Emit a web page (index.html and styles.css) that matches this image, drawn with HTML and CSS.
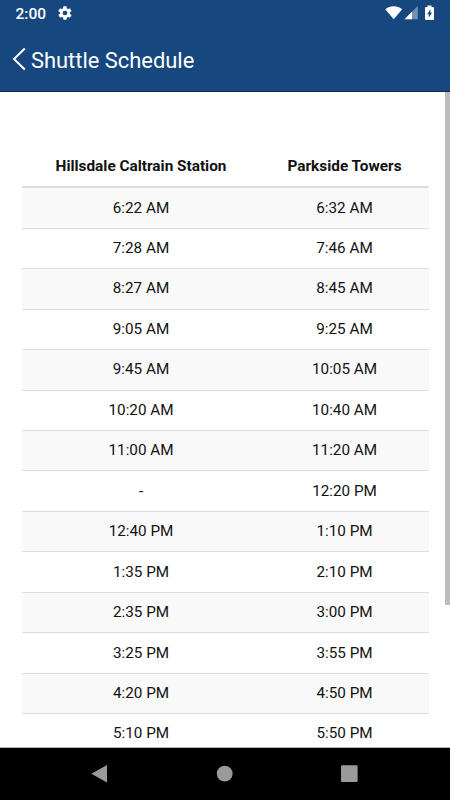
FILE: index.html
```html
<!DOCTYPE html>
<html lang="en">
<head>
<meta charset="utf-8">
<title>Shuttle Schedule</title>
<link rel="stylesheet" href="styles.css">
</head>
<body>
<header class="top">
  <div class="status">
    <span class="clock">2:00</span>
    <svg class="gear" width="16" height="16" viewBox="0 0 24 24"><path fill="#fff" d="M19.4 13a7.5 7.5 0 0 0 0-2l2.1-1.6a.5.5 0 0 0 .1-.7l-2-3.4a.5.5 0 0 0-.6-.2l-2.500 1a7.300 7.300 0 0 0-1.700-1l-.4-2.600a.5.5 0 0 0-.5-.5h-4a.5.5 0 0 0-.5.500l-.4 2.600a7.300 7.300 0 0 0-1.700 1l-2.500-1a.5.5 0 0 0-.6.200l-2 3.400a.5.5 0 0 0 .1.700L4.500 11a7.500 7.500 0 0 0 0 2l-2.100 1.600a.5.5 0 0 0-.1.700l2 3.400c.1.200.4.300.6.200l2.500-1a7.300 7.300 0 0 0 1.700 1l.4 2.600c0 .300.200.500.500.500h4c.3 0 .500-.2.500-.5l.4-2.600a7.300 7.300 0 0 0 1.700-1l2.500 1c.2.100.5 0 .6-.2l2-3.400a.5.5 0 0 0-.1-.7zM12 15.500a3.500 3.500 0 1 1 0-7 3.500 3.500 0 0 1 0 7z"/></svg>
    <svg class="signals" width="52" height="16" viewBox="0 0 52 16">
      <path fill="#fff" d="M.3 4.200C4.700.1 12.700.1 17.200 4.200L8.700 14.300z"/>
      <path fill="#7390b2" d="M32.800 1v13.300H19.500z"/>
      <path fill="#fff" d="M27 6.800v7.500h-7.500z"/>
      <path fill="#fff" d="M42.500.500h4V2h1.600q.9 0 .9.900v11.200q0 .9-.9.900h-7.200q-.9 0-.9-.9V2.900q0-.9.900-.9h1.600z"/>
      <path fill="#16477e" d="M45.400 4.200v3.300h1.600l-3.200 5.300V9.200h-1.600z"/>
    </svg>
  </div>
  <div class="title-bar">
    <svg class="back" width="14" height="24" viewBox="0 0 14 24"><path fill="none" stroke="#fff" stroke-width="2" d="M12.800 1.500 2 12l10.800 10.500"/></svg>
    <h1>Shuttle Schedule</h1>
  </div>
</header>
<main class="content">
  <div class="schedule">
    <div class="row head"><span>Hillsdale Caltrain Station</span><span>Parkside Towers</span></div>
    <div class="row"><span>6:22 AM</span><span>6:32 AM</span></div>
    <div class="row"><span>7:28 AM</span><span>7:46 AM</span></div>
    <div class="row"><span>8:27 AM</span><span>8:45 AM</span></div>
    <div class="row"><span>9:05 AM</span><span>9:25 AM</span></div>
    <div class="row"><span>9:45 AM</span><span>10:05 AM</span></div>
    <div class="row"><span>10:20 AM</span><span>10:40 AM</span></div>
    <div class="row"><span>11:00 AM</span><span>11:20 AM</span></div>
    <div class="row"><span>-</span><span>12:20 PM</span></div>
    <div class="row"><span>12:40 PM</span><span>1:10 PM</span></div>
    <div class="row"><span>1:35 PM</span><span>2:10 PM</span></div>
    <div class="row"><span>2:35 PM</span><span>3:00 PM</span></div>
    <div class="row"><span>3:25 PM</span><span>3:55 PM</span></div>
    <div class="row"><span>4:20 PM</span><span>4:50 PM</span></div>
    <div class="row"><span>5:10 PM</span><span>5:50 PM</span></div>
  </div>
  <div class="scroll-thumb"></div>
</main>
<nav class="system-nav">
  <svg width="450" height="52" viewBox="0 0 450 52">
    <g fill="#9a9a9a">
      <path d="M91.300 25.700 107 17v17.600z"/>
      <circle cx="224.700" cy="25.700" r="7.900"/>
      <rect x="341" y="17.300" width="16.600" height="16.600" rx="1.200"/>
    </g>
  </svg>
</nav>
</body>
</html>
```
FILE: styles.css
```css
* { box-sizing: border-box; }

body {
  margin: 0;
  height: 800px;
  display: flex;
  flex-direction: column;
  overflow: hidden;
  background: #fff;
  color: #111;
  font-family: Roboto, "Liberation Sans", sans-serif;
}

.top {
  height: 92px;
  flex: none;
  background: #16477e;
  border-bottom: 1px solid #08285c;
  color: #fff;
}

.status {
  height: 28px;
  padding: 0 13px 0 15.500px;
  display: flex;
  align-items: center;
}

.clock {
  width: 41.500px;
  font-size: 15.500px;
  font-weight: 500;
  line-height: 28px;
}

.gear { margin-top: -2px; }

.signals { margin: -2px 0 0 auto; }

.title-bar {
  height: 64px;
  padding-left: 12px;
  display: flex;
  align-items: center;
  gap: 5px;
}

h1 {
  margin: 1px 0 0;
  font-size: 21.900px;
  font-weight: 400;
  line-height: 30px;
}

.back { margin-top: -2px; }

.content {
  height: 656px;
  flex: none;
  display: flex;
  overflow: hidden;
  border-bottom: 1px solid #b4b8b9;
}

.schedule {
  width: 407px;
  margin: 51.500px 16px 0 22px;
  flex: none;
}

.row {
  height: 40.460px;
  padding-bottom: 1px;
  display: grid;
  grid-template-columns: 238px 169px;
  align-items: center;
  text-align: center;
  font-size: 15.250px;
  border-bottom: 1px solid #dedede;
}

.row:nth-child(even) { background: #f9f9f9; }

.head {
  height: 44.800px;
  padding: 1.500px 0 0;
  font-size: 15.350px;
  font-weight: 700;
  border-bottom: 2px solid #dcdcdc;
}

.scroll-thumb {
  width: 5px;
  height: 513px;
  background: #bcbcbc;
}

.system-nav {
  height: 52px;
  background: #000;
}

.system-nav svg { display: block; }
```
